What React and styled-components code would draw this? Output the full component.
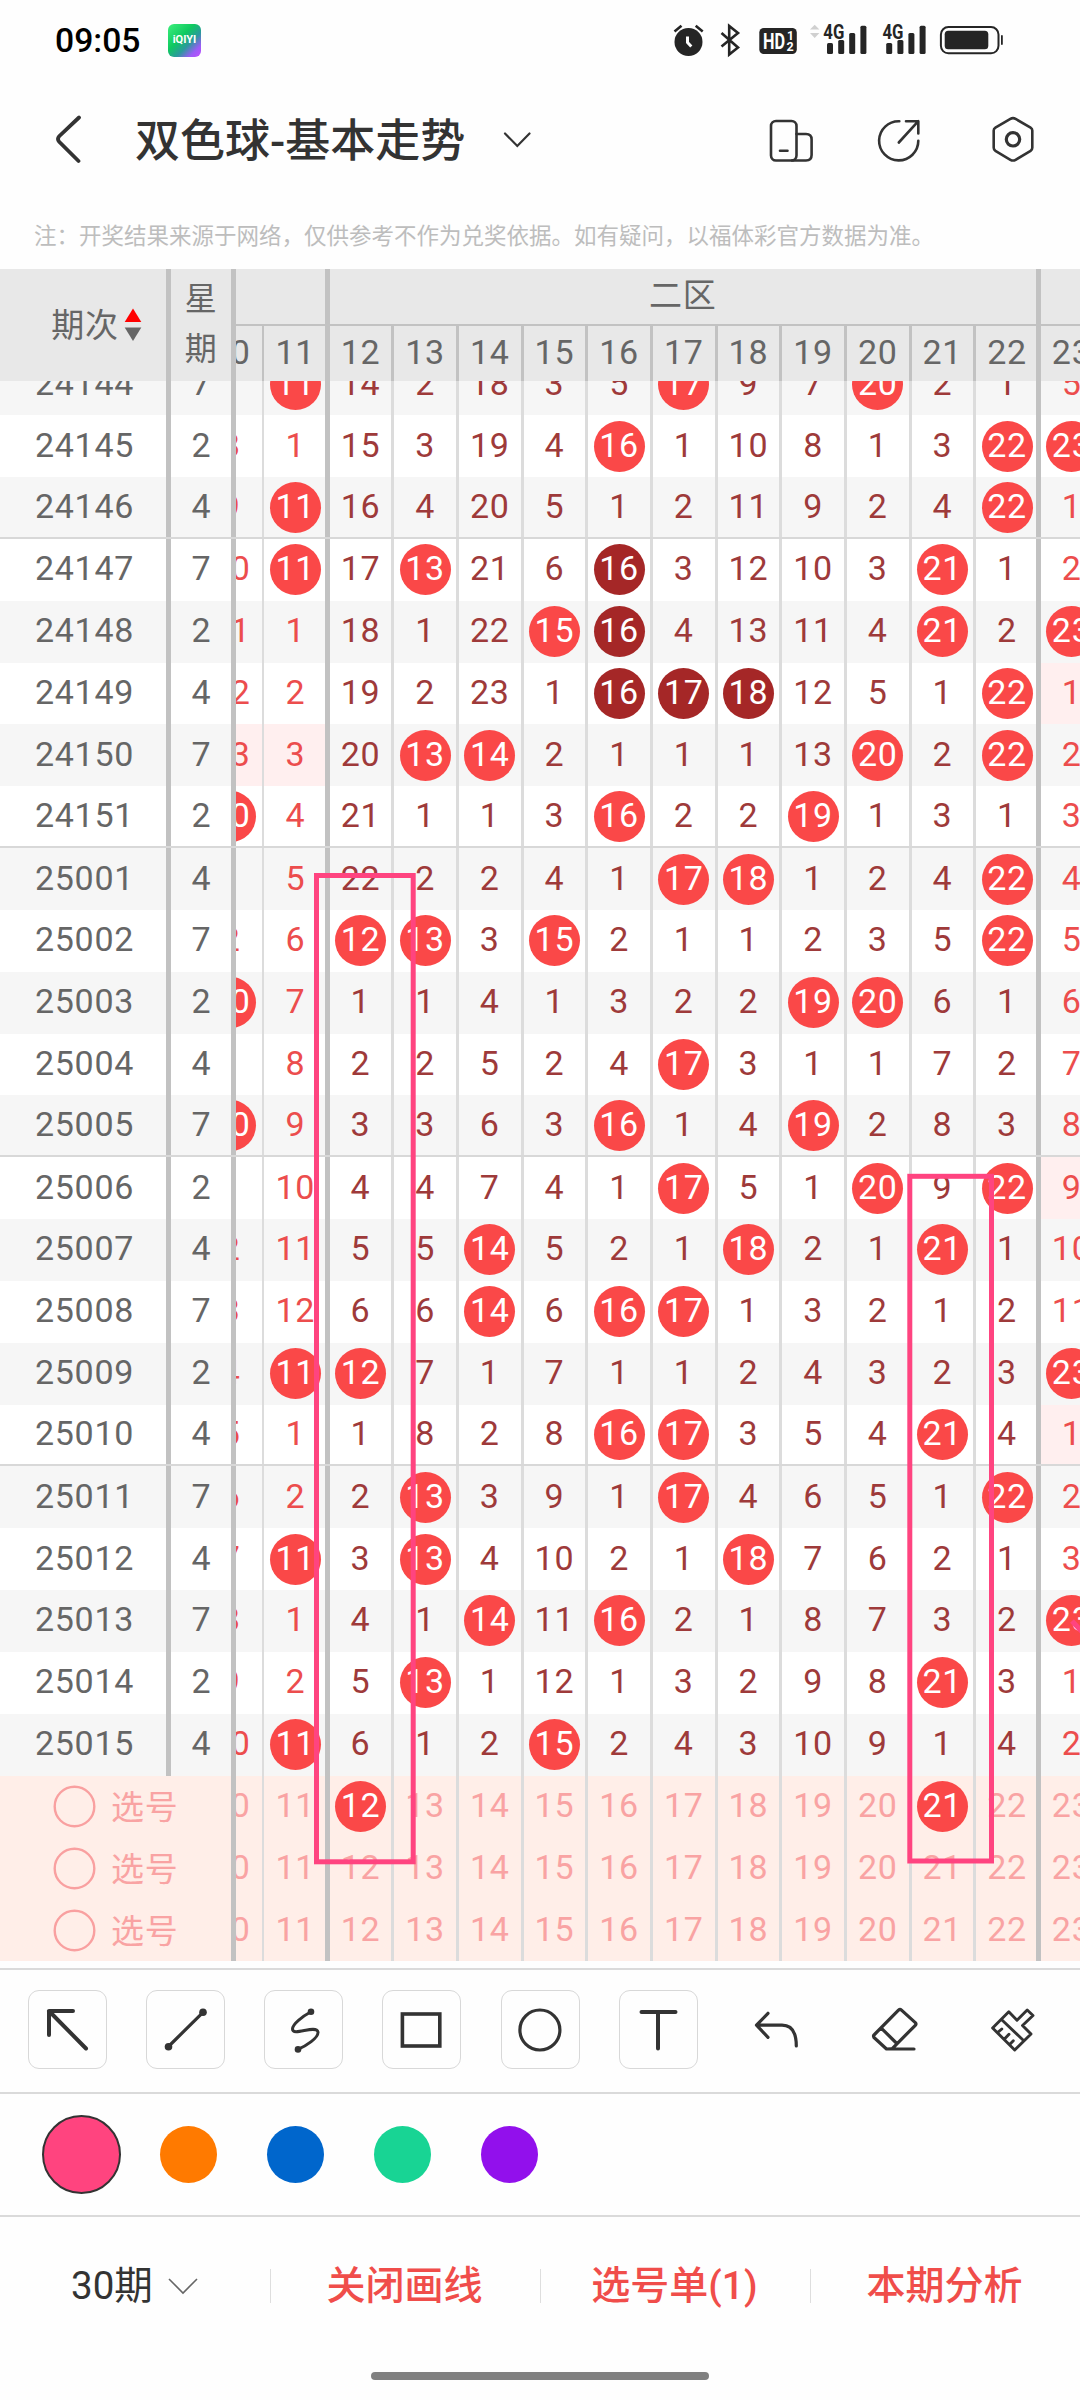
import React from "react";
import styled, { createGlobalStyle } from "styled-components";

const COLUMNS = [10, 11, 12, 13, 14, 15, 16, 17, 18, 19, 20, 21, 22, 23];

// 24144 row, 0 = drawn in that issue
const FIRST_ROW = [7, 0, 14, 2, 18, 3, 5, 0, 9, 7, 0, 2, 1, 5];

// streak: balls painted dark, cold: columns with the pink background
const DRAWS = [
  { issue: "24144", day: 7, hits: [11, 17, 20] },
  { issue: "24145", day: 2, hits: [16, 22, 23] },
  { issue: "24146", day: 4, hits: [11, 22], line: true },
  { issue: "24147", day: 7, hits: [11, 13, 16, 21], streak: [16] },
  { issue: "24148", day: 2, hits: [15, 16, 21, 23], streak: [16] },
  { issue: "24149", day: 4, hits: [16, 17, 18, 22], streak: [16, 17, 18], cold: [23] },
  { issue: "24150", day: 7, hits: [13, 14, 20, 22], cold: [10, 11] },
  { issue: "24151", day: 2, hits: [10, 16, 19], line: true },
  { issue: "25001", day: 4, hits: [17, 18, 22] },
  { issue: "25002", day: 7, hits: [12, 13, 15, 22] },
  { issue: "25003", day: 2, hits: [10, 19, 20] },
  { issue: "25004", day: 4, hits: [17] },
  { issue: "25005", day: 7, hits: [10, 16, 19], line: true },
  { issue: "25006", day: 2, hits: [17, 20, 22], cold: [23] },
  { issue: "25007", day: 4, hits: [14, 18, 21] },
  { issue: "25008", day: 7, hits: [14, 16, 17] },
  { issue: "25009", day: 2, hits: [11, 12, 23] },
  { issue: "25010", day: 4, hits: [16, 17, 21], line: true, cold: [23] },
  { issue: "25011", day: 7, hits: [13, 17, 22] },
  { issue: "25012", day: 4, hits: [11, 13, 18] },
  { issue: "25013", day: 7, hits: [14, 16, 23] },
  { issue: "25014", day: 2, hits: [13, 21] },
  { issue: "25015", day: 4, hits: [11, 15] },
];

const PICKS = [[12, 21], [], []];
const COLORS = ["#ff447f", "#ff7a00", "#0066cc", "#18d494", "#9210ec"];

const buildRows = () => {
  let gaps = FIRST_ROW;
  return DRAWS.map((draw, i) => {
    if (i > 0) {
      gaps = gaps.map((gap, c) => (draw.hits.includes(COLUMNS[c]) ? 0 : gap + 1));
    }
    return { ...draw, gaps };
  });
};

const toolIcons = [
  <g key="arrow" strokeWidth="4">
    <path d="M45 21H21V45M21 21L58 58.5" />
  </g>,
  <g key="line" strokeWidth="3.2">
    <path d="M22.5 56.5L57 22.3" />
    <circle className="dot" cx="22.5" cy="56.7" r="3.8" />
    <circle className="dot" cx="57" cy="22.3" r="3.8" />
  </g>,
  <g key="curve" strokeWidth="3">
    <path d="M47 21.7C39 26 28.5 34 28.5 39C28.5 47 52 34 54 42C54.5 48 42 56 34 59.3" />
    <circle className="dot" cx="47" cy="21.8" r="3.3" />
    <circle className="dot" cx="34" cy="59.4" r="3.3" />
  </g>,
  <g key="rect" strokeWidth="3.6" strokeLinejoin="miter">
    <rect x="20.4" y="24" width="37.4" height="32" />
  </g>,
  <g key="circle" strokeWidth="3.2">
    <circle cx="38.9" cy="40" r="20" />
  </g>,
  <g key="text" strokeWidth="4">
    <path d="M22.5 22H56.5M39 22V58.5" />
  </g>,
  <g key="undo" strokeWidth="3.2">
    <path d="M31 23.3L19.5 35.2L31 47.3M20 35.2H45C55 35.2 59.3 42 59.3 56" />
  </g>,
  <g key="eraser" strokeWidth="3.2">
    <path d="M43.5 20.2Q45 18.8 46.5 20.2L60.3 32.6Q61.6 34 60.3 35.3L37.5 58.3Q37 59 31.5 59L19 47.5Q18 46 19 45ZM19 45L43.5 20.2M26.5 38.3L41.3 53M32 59H59" />
  </g>,
  <g key="brush" strokeWidth="2.9">
    <path d="M19.6 38L35.8 21.8L44 30.2L54.2 20L60 25.5L49.5 35.5L58 44L41.7 60ZM29 30L50.3 50.3M24.8 42.4L28.8 39M31.7 48.8L36 44.2M36.9 54.2L40.3 50.8" />
  </g>,
];

const StatusIcons = () => (
  <svg width="334" height="36" viewBox="672 22 334 36">
    <g fill="#252525">
      <circle cx="688.5" cy="42" r="14" />
      <path d="M674.5 31.5L681.5 25.8M702.7 31.5L695.7 25.8" stroke="#252525" strokeWidth="2.6" />
      <path d="M687.5 36.5V42.5L691.3 46.6" fill="none" stroke="#fff" strokeWidth="3" />
      <path
        d="M721.5 33L738 47.4L729.2 54.5V26L738 33L721.5 46.5"
        fill="none"
        stroke="#252525"
        strokeWidth="2.6"
      />
      <rect x="759.3" y="28" width="37.5" height="26" rx="4.5" />
      <path d="M810 29.5L814.7 24.8L819.4 29.5ZM810 33L814.7 38L819.4 33Z" fill="#d0d0d0" />
      <rect x="827" y="43" width="6" height="11" rx="1.5" />
      <rect x="838.2" y="40" width="6" height="14" rx="1.5" />
      <rect x="849.2" y="33" width="6" height="21" rx="1.5" />
      <rect x="860.4" y="25.8" width="6" height="28.2" rx="1.5" />
      <rect x="886.2" y="43" width="6" height="11" rx="1.5" />
      <rect x="897.4" y="40" width="6" height="14" rx="1.5" />
      <rect x="908.4" y="33" width="6" height="21" rx="1.5" />
      <rect x="919.6" y="25.8" width="6" height="28.2" rx="1.5" />
      <rect x="940.9" y="27" width="57.6" height="26.3" rx="7.5" fill="none" stroke="#252525" strokeWidth="2" />
      <rect x="944.7" y="30.8" width="43.6" height="18.4" rx="3.5" />
      <rect x="1001" y="35" width="1.8" height="10" rx="0.9" />
    </g>
    <g fontFamily="Roboto, sans-serif" fontWeight="700">
      <text x="763" y="48.6" fontSize="21.5" fill="#fff" textLength="22" lengthAdjust="spacingAndGlyphs">HD</text>
      <text x="787" y="40" fontSize="12" fill="#fff">1</text>
      <text x="786.4" y="51" fontSize="12.5" fill="#fff">2</text>
      <text x="823.3" y="38.5" fontSize="19.5" fill="#252525" textLength="21" lengthAdjust="spacingAndGlyphs">4G</text>
      <text x="882.5" y="38.5" fontSize="19.5" fill="#252525" textLength="21" lengthAdjust="spacingAndGlyphs">4G</text>
    </g>
  </svg>
);

const App = () => {
  const rows = buildRows();
  const [color, setColor] = React.useState(0);

  return (
    <Page>
      <GlobalStyle />
      <StatusBar>
        <Clock>09:05</Clock>
        <AppBadge>iQIYI</AppBadge>
        <StatusIcons />
      </StatusBar>

      <TitleBar>
        <svg width="28" height="50" viewBox="0 0 28 50">
          <path d="M25 2.5L5.2 21.2Q2.8 24 5.2 26.8L24.5 46" fill="none" stroke="#333" strokeWidth="3.8" strokeLinecap="round" />
        </svg>
        <Title>双色球-基本走势</Title>
        <svg width="30" height="20" viewBox="0 0 30 20">
          <path d="M3 3.5L15.3 16L27.5 3.5" fill="none" stroke="#333" strokeWidth="2.2" strokeLinecap="round" />
        </svg>
        <TitleActions>
          <svg width="46" height="50" viewBox="0 0 46 50">
            <rect x="3" y="6" width="25.5" height="39.5" rx="5" />
            <path d="M28.5 19H38Q43.6 19 43.6 24.5V40Q43.6 45.5 38 45.5H24M12 35.7H19.5" />
          </svg>
          <svg width="46" height="50" viewBox="0 0 46 50">
            <path d="M23.3 6.2A19.6 19.6 0 1 0 42.3 25.8M30 6.2H42.3V18.5M42.3 6.2L22.8 27.5" />
          </svg>
          <svg width="46" height="50" viewBox="0 0 46 50">
            <path d="M20.4 3.9Q23 2.4 25.6 3.9L40.6 12.6Q42.3 13.6 42.3 15.6V32.8Q42.3 34.8 40.6 35.8L25.6 44.8Q23 46.3 20.4 44.8L5.4 35.8Q3.7 34.8 3.7 32.8V15.6Q3.7 13.6 5.4 12.6Z" />
            <circle cx="23" cy="24.3" r="6.7" strokeWidth="3.2" />
          </svg>
        </TitleActions>
      </TitleBar>

      <Notice>注：开奖结果来源于网络，仅供参考不作为兑奖依据。如有疑问，以福体彩官方数据为准。</Notice>

      <Board>
        <Header>
          <IssueHead>
            期次
            <svg width="18" height="34" viewBox="0 0 18 34">
              <path d="M9 0.5L17.3 14H0.7Z" fill="#f00" />
              <path d="M9 33L17.3 19.5H0.7Z" fill="#666" />
            </svg>
          </IssueHead>
          <DayHead>
            <span>星</span>
            <span>期</span>
          </DayHead>
          <Viewport>
            <GroupRow>
              <Group span={2} />
              <Group span={11}>二区</Group>
              <Group span={1} />
            </GroupRow>
            <NumberRow>
              {COLUMNS.map((n) => (
                <HeadCell key={n} $n={n}>
                  {n}
                </HeadCell>
              ))}
            </NumberRow>
          </Viewport>
        </Header>

        <Body>
          <Rows>
            {rows.map((row, i) => (
              <Row key={row.issue} $odd={i % 2 === 0} $line={row.line}>
                <IssueCell>{row.issue}</IssueCell>
                <DayCell>{row.day}</DayCell>
                <Viewport>
                  <NumberRow>
                    {COLUMNS.map((n, c) => (
                      <Cell key={n} $n={n} $cold={row.cold?.includes(n)}>
                        {row.gaps[c] === 0 ? (
                          <Ball $dark={row.streak?.includes(n)}>{n}</Ball>
                        ) : (
                          <Gap>{row.gaps[c]}</Gap>
                        )}
                      </Cell>
                    ))}
                  </NumberRow>
                </Viewport>
              </Row>
            ))}
            {PICKS.map((pick, i) => (
              <PickRow key={`pick-${i}`}>
                <PickLabel>
                  <Ring />
                  <Gap>选号</Gap>
                </PickLabel>
                <Viewport>
                  <NumberRow>
                    {COLUMNS.map((n) => (
                      <PickCell key={n} $n={n}>
                        {pick.includes(n) ? <Ball>{n}</Ball> : <Gap>{n}</Gap>}
                      </PickCell>
                    ))}
                  </NumberRow>
                </Viewport>
              </PickRow>
            ))}
          </Rows>
        </Body>

        {/* user drawings over the chart */}
        <Drawing width="1080" height="1692" viewBox="0 269 1080 1692">
          <rect x="316.5" y="875.5" width="96.7" height="986.3" />
          <rect x="909.8" y="1176.3" width="81.7" height="684.7" />
          <path d="M1072 1621L1084 1634" />
        </Drawing>
      </Board>

      <Tools>
        {toolIcons.map((icon, i) => (
          <ToolButton key={icon.key} $plain={i > 5}>
            <svg width="79" height="79" viewBox="0 0 79 79">
              {icon}
            </svg>
          </ToolButton>
        ))}
      </Tools>

      <Palette>
        {COLORS.map((c, i) => (
          <Swatch key={c} onClick={() => setColor(i)}>
            <Dot $color={c} $active={i === color} />
          </Swatch>
        ))}
      </Palette>

      <BottomBar>
        <Period>
          30期
          <svg width="32" height="20" viewBox="0 0 32 20">
            <path d="M2 3L16 17L30 3" fill="none" stroke="#666" strokeWidth="1.6" />
          </svg>
        </Period>
        <Action>关闭画线</Action>
        <Action>选号单(1)</Action>
        <Action>本期分析</Action>
      </BottomBar>
      <HomeBar />
    </Page>
  );
};

const COL = 64.67;
const ROW = 61.84;

const GlobalStyle = createGlobalStyle`
  * {
    box-sizing: border-box;
  }
  body {
    margin: 0;
    background: #fff;
  }
`;

const Page = styled.div`
  display: flex;
  flex-direction: column;
  width: 1080px;
  height: 2400px;
  overflow: hidden;
  background: #fefefe;
  color: #333;
  font-family: Roboto, "Noto Sans CJK SC", sans-serif;
`;

const StatusBar = styled.div`
  display: flex;
  align-items: center;
  height: 80px;
  padding: 0 74px 0 55px;

  & > svg {
    margin-left: auto;
  }
`;

const Clock = styled.div`
  width: 113px;
  color: #000;
  font-size: 33.7px;
  font-weight: 500;
  line-height: 40px;
  padding-top: 2px;
`;

const AppBadge = styled.div`
  width: 33px;
  height: 33px;
  border-radius: 6px;
  background: linear-gradient(135deg, #3df07c 0%, #0fc960 40%, #2a9a9c 62%, #9a5cf6 82%, #c24dff 100%);
  color: #fff;
  font-size: 11px;
  font-weight: 700;
  line-height: 32px;
  text-align: center;
`;

const TitleBar = styled.div`
  display: flex;
  align-items: center;
  height: 120px;
  padding: 0 44px 0 54px;
`;

const Title = styled.div`
  width: 332px;
  margin: 3px 35px 0 53px;
  font-size: 45px;
  font-weight: 500;
  line-height: 60px;
  white-space: nowrap;
`;

const TitleActions = styled.div`
  display: flex;
  gap: 65px;
  margin-left: auto;

  svg {
    fill: none;
    stroke: #333;
    stroke-width: 2.6;
    stroke-linecap: round;
    stroke-linejoin: round;
  }
  svg:nth-child(2) {
    margin: 0 3px 0 -3px;
  }
`;

const Notice = styled.div`
  height: 69px;
  padding-left: 34px;
  color: #bdbdbd;
  font-family: "Noto Sans CJK SC", sans-serif;
  font-size: 22.5px;
  line-height: 68px;
  white-space: nowrap;
`;

const Board = styled.div`
  position: relative;
  height: 1692px;
  flex: none;
  font-size: 34px;
  letter-spacing: 0.7px;
`;

const Header = styled.div`
  display: flex;
  height: 112px;
  background: #e8e8e8;
  color: #666;
`;

const IssueHead = styled.div`
  display: flex;
  align-items: center;
  justify-content: center;
  width: 171px;
  padding: 0 0 4px 27px;
  border-right: 5px solid #c2c2c2;
  font-size: 33px;

  svg {
    margin: 4px 0 0 5px;
  }
`;

const DayHead = styled.div`
  display: flex;
  flex-direction: column;
  align-items: center;
  width: 65px;
  padding-top: 5px;
  border-right: 5px solid #c2c2c2;
  font-size: 32px;
  line-height: 50px;
`;

const Viewport = styled.div`
  flex: 1;
  min-width: 0;
  overflow: hidden;
`;

/* scrolled sideways, column 10 is half hidden */
const NumberRow = styled.div`
  display: grid;
  grid-template-columns: repeat(14, ${COL}px);
  height: 100%;
  margin-left: -37.7px;
`;

const GroupRow = styled(NumberRow)`
  height: 57px;
`;

const Group = styled.div`
  grid-column: span ${({ span }) => span};
  border-bottom: 2px solid #c2c2c2;
  border-left: 2px solid #c2c2c2;
  border-right: 3px solid #c2c2c2;
  font-size: 33px;
  line-height: 54px;
  text-align: center;
`;

const leftWidth = ({ $n }) => ($n > 11 ? 2 : 1);
const rightWidth = ({ $n }) => ($n === 11 || $n === 22 ? 3 : 1);
const leftLine = ({ $n }) => ($n === 12 || $n === 23 ? "#c2c2c2" : "#dcdcdc");
const rightLine = ({ $n }) => ($n === 11 || $n === 22 ? "#c2c2c2" : "#dcdcdc");

const BaseCell = styled.div`
  display: flex;
  align-items: center;
  justify-content: center;
  min-width: 0;
  padding-left: ${({ $n }) => ($n === 11 || $n === 22 ? 2 : 0)}px;
  border-left: ${leftWidth}px solid ${leftLine};
  border-right: ${rightWidth}px solid ${rightLine};
`;

const HeadCell = styled(BaseCell)`
  height: 55px;
  padding-bottom: 4px;
  border-color: #c2c2c2;
`;

const Cell = styled(BaseCell)`
  background: ${({ $cold }) => ($cold ? "#ffefef" : "transparent")};
  color: ${({ $n }) => ($n > 11 && $n < 23 ? "#9e3a3a" : "#ec4d4d")};
`;

const PickCell = styled(BaseCell)`
  color: #f9a3a3;
`;

const Gap = styled.span`
  padding-bottom: 3px;
`;

const Ball = styled.div`
  flex: none;
  width: 51px;
  height: 51px;
  border-radius: 50%;
  background: ${({ $dark }) => ($dark ? "#a52727" : "#fa4848")};
  color: #fff;
  line-height: 48px;
  text-align: center;
`;

const Body = styled.div`
  display: flex;
  flex-direction: column;
  justify-content: flex-end;
  height: 1580px;
  overflow: hidden;
`;

const Rows = styled.div`
  flex: none;
`;

const Row = styled.div`
  display: flex;
  height: ${ROW}px;
  border-bottom: ${({ $line }) => ($line ? "2px solid #d8d8d8" : "none")};
  background: ${({ $odd }) => ($odd ? "#f6f6f6" : "#fff")};
`;

const IssueCell = styled.div`
  display: flex;
  align-items: center;
  justify-content: center;
  width: 171px;
  padding: 0 0 3px 3px;
  border-right: 5px solid #c2c2c2;
  color: #666;
`;

const DayCell = styled(IssueCell)`
  width: 65px;
  padding-left: 1px;
`;

const PickRow = styled.div`
  display: flex;
  height: ${ROW}px;
  background: #ffeee8;
`;

const PickLabel = styled.div`
  display: flex;
  align-items: center;
  width: 236px;
  padding-left: 53px;
  border-right: 5px solid #c2c2c2;
  color: #f9a3a3;
  font-size: 33px;
`;

const Ring = styled.svg.attrs({
  width: 43,
  height: 43,
  viewBox: "0 0 43 43",
  children: <circle cx="21.5" cy="21.5" r="19.8" />,
})`
  margin-right: 15px;
  fill: none;
  stroke: #f9a0a0;
  stroke-width: 2.4;
`;

const Drawing = styled.svg`
  position: absolute;
  top: 0;
  left: 0;
  fill: none;
  stroke: #ff4480;
  stroke-width: 5;
`;

const Tools = styled.div`
  display: flex;
  justify-content: space-between;
  align-items: center;
  flex: none;
  height: 124px;
  margin-top: 7px;
  padding: 0 28px 3px;
  border-top: 2px solid #dadada;
`;

const ToolButton = styled.div`
  display: flex;
  width: 79px;
  height: 79px;
  border: 1px solid ${({ $plain }) => ($plain ? "transparent" : "#d8d8d8")};
  border-radius: 11px;

  svg {
    flex: none;
    margin: -1px;
    fill: none;
    stroke: #333;
    stroke-linecap: round;
    stroke-linejoin: round;
  }
  .dot {
    fill: #333;
    stroke: none;
  }
`;

const Palette = styled.div`
  display: flex;
  align-items: center;
  flex: none;
  gap: 28px;
  height: 123px;
  padding: 0 0 1px 42px;
  border-top: 2px solid #dadada;
`;

const Swatch = styled.div`
  display: flex;
  align-items: center;
  justify-content: center;
  width: 79px;
  height: 79px;
  cursor: pointer;
`;

const Dot = styled.div`
  width: ${({ $active }) => ($active ? 79 : 57)}px;
  height: ${({ $active }) => ($active ? 79 : 57)}px;
  border: ${({ $active }) => ($active ? "2px solid #333" : "none")};
  border-radius: 50%;
  background: ${({ $color }) => $color};
`;

const BottomBar = styled.div`
  display: grid;
  grid-template-columns: repeat(4, 1fr);
  align-items: center;
  flex: none;
  height: 141px;
  padding-bottom: 1px;
  border-top: 2px solid #dadada;
`;

const Period = styled.div`
  display: flex;
  align-items: center;
  padding-left: 71px;
  font-size: 38.5px;
  line-height: 34px;

  svg {
    margin-left: 14px;
  }
`;

const Action = styled.div`
  padding-right: 2px;
  border-left: 1px solid #dedede;
  color: #f04d4a;
  font-size: 39px;
  font-weight: 500;
  line-height: 34px;
  text-align: center;
  white-space: nowrap;
`;

const HomeBar = styled.div`
  flex: none;
  width: 338px;
  height: 8px;
  margin: 16px auto 0;
  border-radius: 4px;
  background: #808080;
`;

export default App;
